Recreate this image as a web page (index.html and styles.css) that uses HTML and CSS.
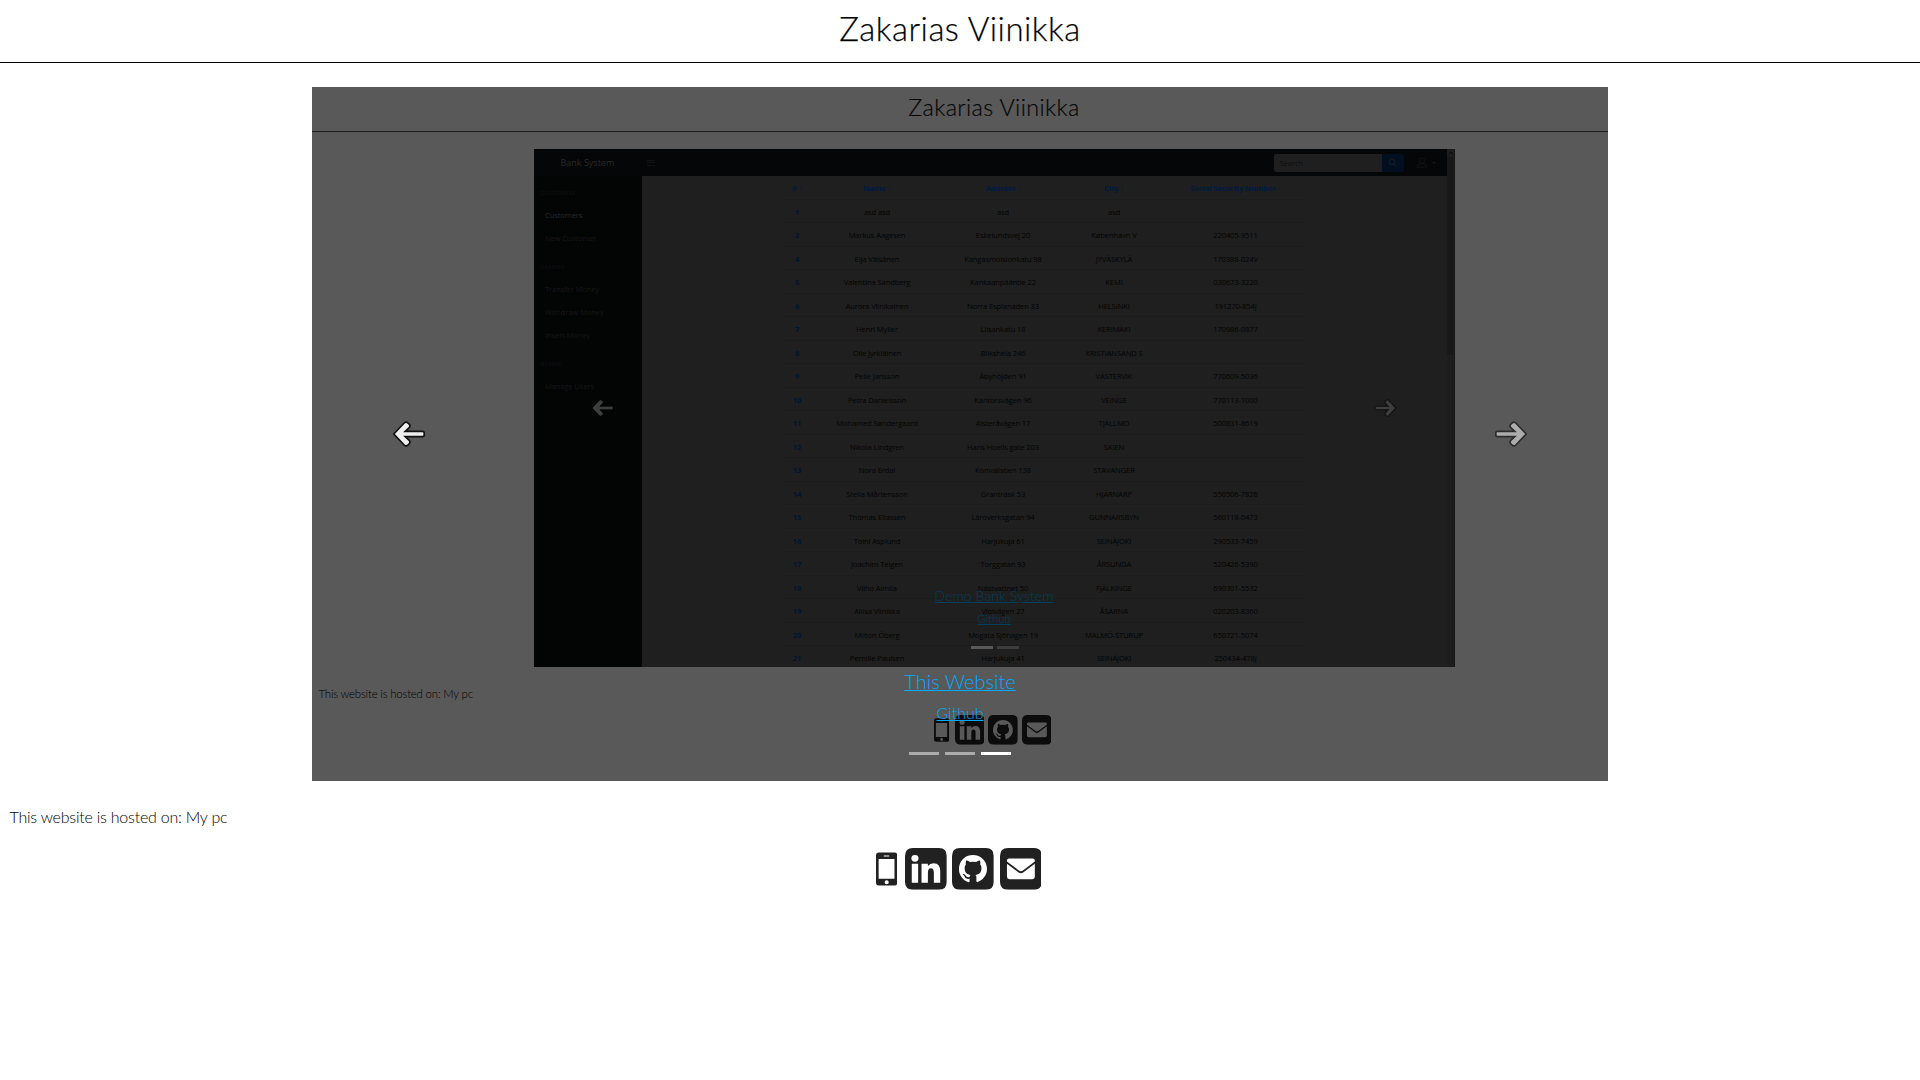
FILE: index.html
```html
<!DOCTYPE html>
<html lang="en">
<head>
<meta charset="utf-8">
<title>Zakarias Viinikka</title>
<link rel="stylesheet" href="styles.css">
</head>
<body>
<svg class="defs" width="0" height="0">
  <symbol id="arrow" viewBox="0 0 32 26"><path d="M.8 13 11.2 2Q13 .2 14.8 1.8L16.4 3.4Q17.7 5 16.2 6.6L12.2 10.4H29.6Q31.2 10.4 31.2 12V14Q31.2 15.6 29.6 15.6H12.2L16.2 19.4Q17.7 21 16.4 22.6L14.8 24.2Q13 25.8 11.2 24Z"/></symbol>
  <symbol id="phone" viewBox="0 0 22 34"><path fill-rule="evenodd" d="M3 0H19Q22 0 22 3V31Q22 34 19 34H3Q0 34 0 31V3Q0 0 3 0ZM2.7 6.8V27H19V6.8ZM8 3.2V4.2H13.6V3.2ZM11 28.6A2.1 2.1 0 1 0 11 32.8 2.1 2.1 0 0 0 11 28.6Z"/></symbol>
  <symbol id="linkedin" viewBox="0 0 42 42"><path fill-rule="evenodd" d="M8 0H34Q42 0 42 8V34Q42 42 34 42H8Q0 42 0 34V8Q0 0 8 0ZM6.8 15.8V35H13.2V15.8ZM10 7A3.6 3.4 0 1 0 10 13.8 3.6 3.4 0 0 0 10 7ZM16.6 15.8V35H23V25Q23 20.4 26 20.4 29 20.4 29 25V35H35.4V23.6Q35.4 15.4 28.8 15.4 25 15.4 23 18.2V15.8Z"/></symbol>
  <symbol id="github" viewBox="0 0 42 42"><path fill-rule="evenodd" d="M8 0H34Q42 0 42 8V34Q42 42 34 42H8Q0 42 0 34V8Q0 0 8 0ZM21 7A14 14 0 0 0 16.6 34.3C17.4 34.4 17.7 34 17.7 33.5V30.9C13.8 31.7 12.9 29.2 12.9 29.2 12.3 27.6 11.4 27.1 11.4 27.1 10 26.2 11.5 26.2 11.5 26.2 12.9 26.3 13.7 27.7 13.7 27.7 15 29.9 17 29.3 17.8 28.9 17.9 28 18.3 27.4 18.7 27.1 15.6 26.7 12.7 25.5 12.7 20.2 12.7 18.7 13.2 17.4 14.1 16.4 13.9 16.1 13.4 14.6 14.2 12.7 14.2 12.7 15.4 12.3 18 14.1A13 13 0 0 1 24.3 14.1C26.9 12.3 28.1 12.7 28.1 12.7 28.9 14.6 28.4 16.1 28.2 16.4 29.1 17.4 29.6 18.7 29.6 20.2 29.6 25.5 26.6 26.7 23.5 27.1 24.1 27.5 24.5 28.4 24.5 29.7V33.5C24.5 34 24.8 34.4 25.5 34.3A14 14 0 0 0 21 7Z"/></symbol>
  <symbol id="mail" viewBox="0 0 42 42"><path fill-rule="evenodd" d="M8 0H34Q42 0 42 8V34Q42 42 34 42H8Q0 42 0 34V8Q0 0 8 0ZM9 10.5Q7 10.5 7 12.5V13.6L19 22.6Q21 24 23 22.6L35 13.6V12.5Q35 10.5 33 10.5ZM7 15.8V29Q7 31.5 9.5 31.5H32.5Q35 31.5 35 29V15.8L23.6 24.3Q21 26.2 18.4 24.3Z"/></symbol>
</svg>

<header class="site-header"><h1>Zakarias Viinikka</h1></header>

<main class="carousel">
  <div class="slide">
    <div class="page">
      <div class="page-title">Zakarias Viinikka</div>
      <div class="shot">
        <div class="bank">
          <div class="bank-nav">
            <span class="brand">Bank System</span>
            <span class="burger"></span>
            <span class="search">Search</span>
            <span class="search-btn"><svg viewBox="0 0 10 10"><circle cx="4.3" cy="4.3" r="3.2"/><path d="M6.7 6.7 9.2 9.2"/></svg></span>
            <svg class="user" viewBox="0 0 12 11"><circle cx="6" cy="3.7" r="2.8"/><path d="M4.5 6.2V7L1 8.2V10.2H11V8.2L7.5 7V6.2"/></svg>
            <span class="caret"></span>
          </div>
          <div class="bank-body">
            <nav class="side">
              <h6>CUSTOMERS</h6><a class="on">Customers</a><a>New Customer</a>
              <h6>CASHIER</h6><a>Transfer Money</a><a>Withdraw Money</a><a>Insert Money</a>
              <h6>ADMIN</h6><a>Manage Users</a>
            </nav>
            <div class="grid">
              <div class="row head"><b>#<i>↑</i></b><b>Name<i>↑</i></b><b>Address<i>↑</i></b><b>City<i>↑</i></b><b>Social Security Number<i>↑</i></b></div>
              <div class="row"><b>1</b><span>asd asd</span><span>asd</span><span>asd</span><span></span></div>
              <div class="row"><b>2</b><span>Markus Aagesen</span><span>Eskelundsvej 20</span><span>København V</span><span>220405-9511</span></div>
              <div class="row"><b>4</b><span>Eija Väisänen</span><span>Kangasmoisionkatu 98</span><span>JYVÄSKYLÄ</span><span>170388-024V</span></div>
              <div class="row"><b>5</b><span>Valentina Sandberg</span><span>Kankaanpääntie 22</span><span>KEMI</span><span>030673-3220</span></div>
              <div class="row"><b>6</b><span>Aurora Viinikainen</span><span>Norra Esplanaden 33</span><span>HELSINKI</span><span>191270-854J</span></div>
              <div class="row"><b>7</b><span>Henri Myller</span><span>Liisankatu 18</span><span>KERIMÄKI</span><span>170986-0877</span></div>
              <div class="row"><b>8</b><span>Olle Jyrkiäinen</span><span>Bliksheia 246</span><span>KRISTIANSAND S</span><span></span></div>
              <div class="row"><b>9</b><span>Pelle Jansson</span><span>Åbyhöjden 91</span><span>VÄSTERVIK</span><span>770609-5036</span></div>
              <div class="row"><b>10</b><span>Petra Danielsson</span><span>Kantorsvägen 96</span><span>VEINGE</span><span>770113-1000</span></div>
              <div class="row"><b>11</b><span>Mohamed Søndergaard</span><span>Alsteråvägen 17</span><span>TJÄLLMO</span><span>500831-8619</span></div>
              <div class="row"><b>12</b><span>Nikola Lindgren</span><span>Hans Hoells gate 203</span><span>SKIEN</span><span></span></div>
              <div class="row"><b>13</b><span>Nora Erdal</span><span>Konvallstien 138</span><span>STAVANGER</span><span></span></div>
              <div class="row"><b>14</b><span>Stella Mårtensson</span><span>Granträsk 53</span><span>HJÄRNARP</span><span>550506-7826</span></div>
              <div class="row"><b>15</b><span>Thomas Eliassen</span><span>Läroverksgatan 94</span><span>GUNNARSBYN</span><span>560118-0473</span></div>
              <div class="row"><b>16</b><span>Toini Asplund</span><span>Harjukuja 61</span><span>SEINÄJOKI</span><span>290533-7459</span></div>
              <div class="row"><b>17</b><span>Joachim Teigen</span><span>Torggatan 93</span><span>ÅRSUNDA</span><span>520426-5390</span></div>
              <div class="row"><b>18</b><span>Vilho Almila</span><span>Nästvattnet 50</span><span>FJÄLKINGE</span><span>690301-5532</span></div>
              <div class="row"><b>19</b><span>Aliisa Viinikka</span><span>Violvägen 27</span><span>ÅSARNA</span><span>020203-8360</span></div>
              <div class="row"><b>20</b><span>Milton Öberg</span><span>Mogata Sjöhagen 19</span><span>MALMÖ-STURUP</span><span>650721-5074</span></div>
              <div class="row"><b>21</b><span>Pernille Paulsen</span><span>Harjukuja 41</span><span>SEINÄJOKI</span><span>250434-478J</span></div>
            </div>
          </div>
        </div>
        <div class="scrollbar"><svg viewBox="0 0 8 8"><path d="M2 5 4 3 6 5"/></svg><span></span></div>
        <svg class="mini-arrow prev"><use href="#arrow"/></svg>
        <svg class="mini-arrow next"><use href="#arrow"/></svg>
        <div class="mini-caption"><a class="big">Demo Bank System</a><a>Github</a></div>
        <div class="mini-dots"><span class="active"></span><span></span></div>
      </div>
      <p class="mini-host">This website is hosted on: My pc</p>
      <div class="icons small">
        <svg class="ph"><use href="#phone"/></svg><svg><use href="#linkedin"/></svg><svg><use href="#github"/></svg><svg><use href="#mail"/></svg>
      </div>
    </div>
  </div>
  <svg class="arrow prev"><use href="#arrow"/></svg>
  <svg class="arrow next"><use href="#arrow"/></svg>
  <div class="caption"><a class="big">This Website</a><a>Github</a></div>
  <div class="dots"><span></span><span></span><span class="active"></span></div>
</main>

<p class="host">This website is hosted on: My pc</p>
<footer class="icons">
  <svg class="ph"><use href="#phone"/></svg><svg><use href="#linkedin"/></svg><svg><use href="#github"/></svg><svg><use href="#mail"/></svg>
</footer>
</body>
</html>
```
FILE: styles.css
```css
* { box-sizing: border-box; }
body { margin: 0; background: #fff; color: #212529; font: 300 16px/24px Lato, sans-serif; overflow: hidden; }
.defs { position: absolute; }
h1, h6, p { margin: 0; }

.site-header { height: 63px; border-bottom: 1px solid #000; text-align: center; }
.site-header h1 { font-size: 33px; font-weight: 300; line-height: 38px; padding-top: 9px; letter-spacing: .48px; color: #000; -webkit-text-stroke: .25px #16191c; }

.carousel { position: relative; width: 1296px; height: 694px; margin: 24px auto 0; }
.slide { height: 694px; overflow: hidden; background: #595959; }
.page { width: 1364px; display: flex; flex-direction: column; color: #101214; }
.page-title { height: 45px; border-bottom: 1px solid #1b1b1b; text-align: center; font-size: 23.4px; line-height: 41px; letter-spacing: .36px; color: #050606; -webkit-text-stroke: .2px #0a0b0c; }

.shot { position: relative; width: 921px; height: 518px; margin: 17px 0 0 221.5px; display: flex; overflow: hidden; background: #1f1f1f; font-family: "Open Sans", "Noto Sans", sans-serif; font-weight: 400; }
.bank { flex: 1; display: flex; flex-direction: column; }
.bank-nav { height: 27px; background: #050607; display: flex; align-items: center; flex: none; color: #292a2a; }
.brand { width: 113px; padding-left: 27px; font-size: 9px; line-height: 27px; }
.burger { width: 8px; height: 6px; border: solid #121313; border-width: 1px 0; background: linear-gradient(#121313, #121313) 0 50% / 100% 1px no-repeat; }
.search { margin-left: auto; width: 108px; height: 18px; padding-left: 6px; background: #1f1f1f; color: #0c0d0e; font-size: 7.5px; line-height: 18px; border-radius: 2px 0 0 2px; }
.search-btn { width: 22px; height: 18px; background: #010f20; border-radius: 0 2px 2px 0; display: flex; align-items: center; justify-content: center; }
.search-btn svg { width: 9px; height: 9px; fill: none; stroke: #1b2025; }
.user { width: 12px; height: 11px; margin-left: 12px; fill: none; stroke: #111212; }
.caret { margin: 0 11px 0 4px; border: 2px solid transparent; border-top-color: #161717; border-bottom: 0; }
.bank-body { flex: 1; display: flex; }
.side { width: 108px; background: #030404; padding-top: 4px; font-size: 7.4px; color: #171818; }
.side h6 { font-size: 5.8px; font-weight: 700; line-height: 17px; padding: 5px 0 0 7px; color: #0c0d0d; }
.side h6 + a { margin-top: 2px; }
.side h6:not(:first-child) { padding-top: 9px; }
.side a { display: block; height: 23px; line-height: 22px; padding-left: 11.5px; }
.side .on { color: #2a2b2b; }
.grid { margin-left: 141px; width: 524px; font-size: 7.6px; letter-spacing: -.12px; color: #020303; }
.row { display: grid; grid-template-columns: 29px 131px 121px 101px 142px; height: 23.53px; line-height: 25px; text-align: center; border-bottom: 1px solid #1b1c1c; }
.row b { color: #001536; }
.row.head b { color: #001b42; }
.row i { font-style: normal; font-weight: 400; font-size: 6.5px; margin-left: 2px; }
.scrollbar { width: 8px; background: #1d1d1d; border-right: 1px solid #161616; display: flex; flex-direction: column; }
.scrollbar svg { width: 8px; height: 8px; fill: none; stroke: #0c0c0c; }
.scrollbar span { height: 198px; background: #181818; }

.mini-arrow { position: absolute; top: 250px; width: 23px; height: 18px; overflow: visible; fill: #3d3d3d; stroke: #121212; stroke-width: 1.8; }
.mini-arrow.prev { left: 57.5px; stroke: #060707; stroke-width: 1.2; }
.mini-arrow.next { right: 57.5px; transform: scaleX(-1); }
.mini-caption { position: absolute; left: 0; right: 0; top: 435px; display: flex; flex-direction: column; align-items: center; font: 300 11.4px/22px Lato, sans-serif; color: #023e5e; }
.mini-caption .big { font-size: 14.2px; line-height: 24px; }
.mini-caption a, .caption a { text-decoration: underline; text-decoration-thickness: 1px; }
.mini-dots { position: absolute; left: 437px; top: 497px; display: flex; gap: 4px; }
.mini-dots span { width: 22px; height: 3px; background: #3c3c3c; }
.mini-dots .active { background: #595959; }
.mini-host { font-size: 11.4px; line-height: 18px; margin: 18px 0 0 6.5px; letter-spacing: -.18px; color: #000; }

.icons { display: flex; justify-content: center; align-items: center; gap: 5.4px; height: 42px; margin-top: 19px; padding-right: 3px; fill: #212121; }
.icons svg { width: 41.8px; height: 41.8px; }
.icons .ph { width: 21.4px; height: 34px; margin-right: 2.8px; }
.icons.small { fill: #0c0c0c; height: 30px; gap: 3.8px; margin-top: 12px; padding-right: 3px; }
.small svg { width: 29.8px; height: 29.8px; }
.small .ph { width: 15.2px; height: 24px; margin-right: 2px; }

.arrow { position: absolute; top: 334px; width: 32px; height: 26px; overflow: visible; fill: #efefef; stroke: #111; stroke-width: 1.7; }
.arrow.prev { left: 80.5px; }
.arrow.next { right: 81px; transform: scaleX(-1); opacity: .5; fill: #fff; stroke: #000; }
.caption { position: absolute; left: 0; right: 0; top: 582px; display: flex; flex-direction: column; align-items: center; color: #00aaff; }
.caption .big { font-size: 20px; line-height: 24px; margin-bottom: 8px; }
.dots { position: absolute; left: 597px; top: 665px; display: flex; gap: 6px; }
.dots span { width: 30px; height: 3px; background: #acacac; }
.dots .active { background: #fff; }
.host { margin: 24px 0 0 9.5px; letter-spacing: -.22px; color: #000; }
```
